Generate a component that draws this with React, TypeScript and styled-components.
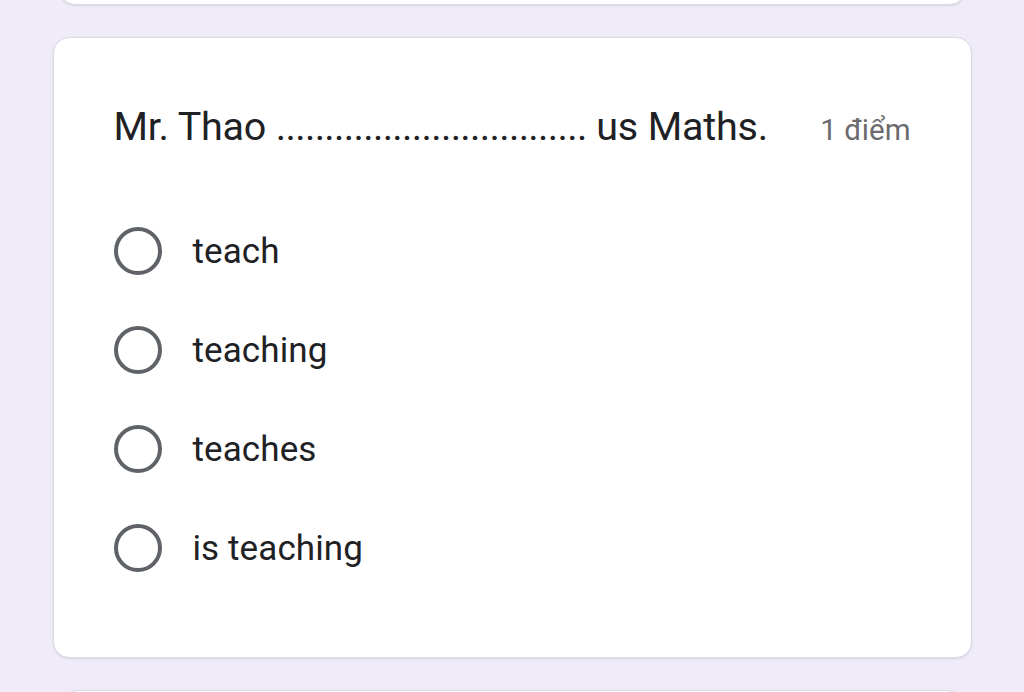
import React from "react";
import styled, { createGlobalStyle } from "styled-components";

const Global = createGlobalStyle`
  html, body { margin: 0; padding: 0; background: #efebf8; }
  body { font-family: Roboto, "Noto Sans", sans-serif; }
`;

const Page = styled.div`
  width: 1024px;
  height: 750px;
  overflow: hidden;
  background: #efebf8;
  display: flex;
  flex-direction: column;
  align-items: center;
  gap: 32px;
  margin-top: -58px;
`;

const Card = styled.div<{ $w: number; $h: number }>`
  box-sizing: border-box;
  width: ${(p) => p.$w}px;
  height: ${(p) => p.$h}px;
  flex: none;
  background: #ffffff;
  border: 1.5px solid #dcd9e2;
  border-radius: 16px;
  box-shadow: 0 1px 2px rgba(60, 50, 90, 0.12);
`;

const QuestionCard = styled(Card)`
  padding: 65px 60px 0 60px;
`;

const Header = styled.div`
  display: flex;
  align-items: baseline;
  justify-content: space-between;
`;

const Question = styled.div`
  font-size: 39.5px;
  color: #202124;
  letter-spacing: -0.2px;
  white-space: nowrap;
`;

const Dots = styled.span`
  letter-spacing: -0.7px;
`;

const Points = styled.div`
  font-size: 29.5px;
  color: #6b6b6e;
`;

const Options = styled.div`
  display: flex;
  flex-direction: column;
  gap: 51px;
  margin-top: 77px;
`;

const Option = styled.label`
  display: flex;
  align-items: center;
  gap: 31px;
  height: 48px;
  font-size: 35px;
  color: #202124;
  letter-spacing: 0.1px;
`;

const Radio = styled.span`
  box-sizing: border-box;
  width: 48px;
  height: 48px;
  border-radius: 50%;
  border: 4px solid #5f6368;
  flex: none;
`;

const options = ["teach", "teaching", "teaches", "is teaching"];

export default function App() {
  return (
    <>
      <Global />
      <Page>
        <Card $w={907} $h={63} />
        <QuestionCard $w={919} $h={621}>
          <Header>
            <Question>
              Mr. Thao <Dots>{".".repeat(32)}</Dots> us Maths.
            </Question>
            <Points>1 điểm</Points>
          </Header>
          <Options>
            {options.map((o) => (
              <Option key={o}>
                <Radio />
                {o}
              </Option>
            ))}
          </Options>
        </QuestionCard>
        <Card $w={901} $h={100} />
      </Page>
    </>
  );
}
